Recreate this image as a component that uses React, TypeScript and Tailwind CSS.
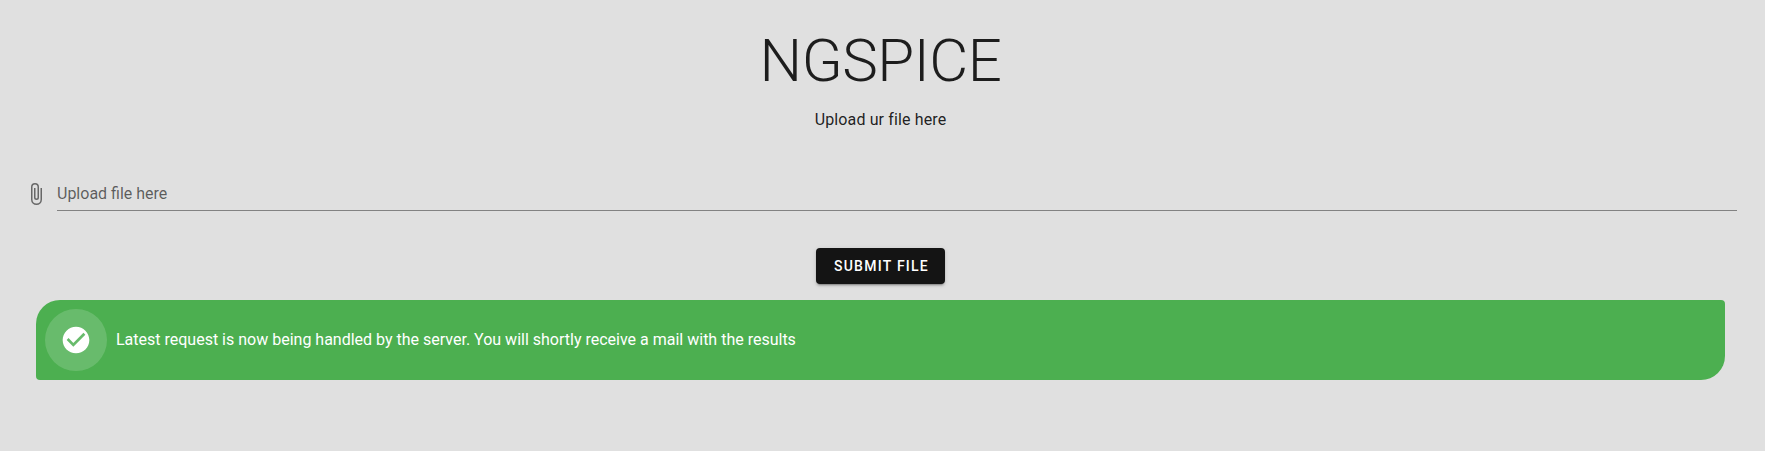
export default function App() {
  return (
    <main className="h-[451px] overflow-hidden bg-[#e0e0e0] pr-7 pl-6 font-['Roboto',sans-serif] text-black/87">
      <header className="flex flex-col items-center pt-[31px]">
        <h1 className="text-[60px] leading-[60px] font-light tracking-[-0.5px]">NGSPICE</h1>
        <p className="mt-[17px] text-base leading-6 tracking-[0.13px]">Upload ur file here</p>
      </header>
      <section className="mt-[46px] flex h-[33px]">
        <svg className="mt-1 mr-[9px] h-6 w-6 shrink-0 text-black/54" viewBox="0 0 24 24" fill="currentColor">
          <path d="M16.5,6V17.5A4,4 0 0,1 12.5,21.5A4,4 0 0,1 8.5,17.5V5A2.5,2.5 0 0,1 11,2.5A2.5,2.5 0 0,1 13.5,5V15.5A1,1 0 0,1 12.5,16.5A1,1 0 0,1 11.5,15.5V6H10V15.5A2.5,2.5 0 0,0 12.5,18A2.5,2.5 0 0,0 15,15.5V5A4,4 0 0,0 11,1A4,4 0 0,0 7,5V17.5A5.5,5.5 0 0,0 12.5,23A5.5,5.5 0 0,0 18,17.5V6H16.5Z" />
        </svg>
        <div className="flex-1 border-b border-black/42 pt-1 text-base leading-6 text-black/60">Upload file here</div>
      </section>
      <div className="mt-[37px] flex justify-center">
        <button className="h-9 w-[129px] rounded bg-[#141414] pl-[2px] text-sm font-medium tracking-[1.25px] text-white shadow-[0_3px_1px_-2px_rgba(0,0,0,.2),0_2px_2px_0_rgba(0,0,0,.14),0_1px_5px_0_rgba(0,0,0,.12)]">SUBMIT FILE</button>
      </div>
      <div className="mx-3 mt-4 flex h-20 items-center rounded rounded-tl-[24px] rounded-br-[24px] bg-[#4caf50] pl-[9px] text-white">
        <div className="flex size-[62px] items-center justify-center rounded-full bg-white/16">
          <svg className="size-8" viewBox="0 0 24 24" fill="currentColor">
            <path d="M12 2C6.5 2 2 6.5 2 12S6.5 22 12 22 22 17.5 22 12 17.5 2 12 2M10 17L5 12L6.41 10.59L10 14.17L17.59 6.58L19 8L10 17Z" />
          </svg>
        </div>
        <span className="ml-[9px] text-base">Latest request is now being handled by the server. You will shortly receive a mail with the results</span>
      </div>
    </main>
  );
}
